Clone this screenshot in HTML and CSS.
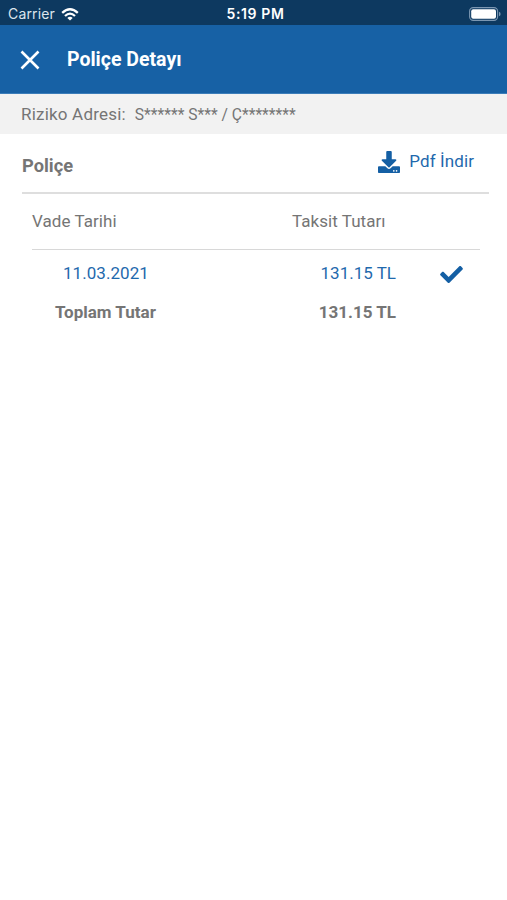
FILE: index.html
```html
<!DOCTYPE html>
<html lang="tr">
<head>
<meta charset="utf-8">
<title>Poliçe Detayı</title>
<link rel="stylesheet" href="styles.css">
</head>
<body>
<div class="status">
  <div class="carrier"><span>Carrier</span>
    <svg class="wifi" viewBox="0 0 18 13" fill="none" stroke="#fff" stroke-width="2.3"><path d="M1.2 4.9Q9-2.3 16.8 4.9M4 8Q9 3.2 14 8"/><path d="M9 12.6L6.3 9.9Q9 7.7 11.7 9.9Z" fill="#fff" stroke="none"/></svg>
  </div>
  <span class="time">5:19 PM</span>
  <svg class="battery" viewBox="0 0 32 14"><rect x=".6" y=".6" width="28" height="12.8" rx="3.6" fill="none" stroke="#7c97b2" stroke-width="1.1"/><rect x="2.2" y="2.3" width="24.8" height="9.4" rx="2" fill="#fff"/><path d="M30 4.8Q31.6 5.3 31.6 7T30 9.2Z" fill="#7c97b2"/></svg>
</div>
<header class="bar">
  <svg class="close" viewBox="0 0 20 20"><path d="M1.500 1.500l17 17M18.500 1.500l-17 17" stroke="#fff" stroke-width="2.6"/></svg>
  <h1>Poliçe Detayı</h1>
</header>
<div class="address"><span class="address-label">Riziko Adresi:</span><span class="masked">S****** S*** / Ç********</span></div>
<main>
  <div class="section-head">
    <h2>Poliçe</h2>
    <a class="pdf"><svg class="download" viewBox="0 0 512 512" fill="#145fa4"><path d="M216 0h80c13.300 0 24 10.700 24 24v168h87.700c17.800 0 26.700 21.500 14.100 34.100L269.700 378.300c-7.500 7.500-19.800 7.500-27.300 0L90.100 226.100c-12.600-12.600-3.700-34.100 14.100-34.100H192V24c0-13.300 10.700-24 24-24zm296 376v112c0 13.300-10.700 24-24 24H24c-13.300 0-24-10.700-24-24V376c0-13.300 10.700-24 24-24h146.700l49 49c20.100 20.100 52.500 20.100 72.600 0l49-49H488c13.300 0 24 10.700 24 24zm-124 88c0-11-9-20-20-20s-20 9-20 20 9 20 20 20 20-9 20-20zm64 0c0-11-9-20-20-20s-20 9-20 20 9 20 20 20 20-9 20-20z"/></svg><span>Pdf İndir</span></a>
  </div>
  <div class="table">
    <div class="row head"><span>Vade Tarihi</span><span class="amount-head">Taksit Tutarı</span></div>
    <div class="row item"><span class="date">11.03.2021</span><span class="amount">131.15 TL</span>
      <svg class="check" viewBox="0 65 512 382" fill="#145fa4"><path d="M173.900 439.400l-166.400-166.400c-10-10-10-26.200 0-36.200l36.200-36.200c10-10 26.200-10 36.200 0L192 312.700 432.100 72.600c10-10 26.200-10 36.200 0l36.200 36.200c10 10 10 26.200 0 36.200l-294.400 294.400c-10 10-26.200 10-36.200 0z"/></svg>
    </div>
    <div class="row total"><span class="label">Toplam Tutar</span><span class="amount">131.15 TL</span></div>
  </div>
</main>
</body>
</html>
```
FILE: styles.css
```css
* { box-sizing: border-box; }
body { margin: 0; background: #fff; color: #757575; font: 17px/24px Roboto, sans-serif; }
svg { display: block; flex: none; }
h1, h2 { margin: 0; }
.status { height: 25px; padding: 1px 6px 0 8px; display: grid; grid-template-columns: 1fr auto 1fr; align-items: center; background: #0d3960; color: #fff; font: 14px/24px Inter, sans-serif; }
.carrier { display: flex; align-items: center; gap: 6px; padding-top: 1px; color: #dce5ed; letter-spacing: .15px; }
.wifi { width: 18px; height: 13px; }
.time { font-weight: 600; letter-spacing: .6px; padding: 1px 0 0 2px; }
.battery { width: 32px; height: 14px; justify-self: end; }
.bar { height: 69px; padding-left: 20px; display: flex; align-items: center; gap: 27px; background: #1761a5; border-bottom: 1px solid #3c7db9; color: #fff; }
.close { width: 20px; height: 20px; margin-top: 1px; }
.bar h1 { font-size: 19.5px; line-height: 26px; font-weight: 700; padding-top: 1px; }
.address { height: 40px; padding-left: 21px; display: flex; align-items: center; gap: 9px; background: #f2f2f2; }
.address-label { letter-spacing: .2px; }
.masked { font-size: 15.600px; padding-top: 1px; }
main { padding: 0 18px 0 22px; }
.section-head { height: 60px; display: flex; justify-content: space-between; border-bottom: 2px solid #dedede; }
.section-head h2 { padding-top: 20px; font-size: 18.300px; font-weight: 700; }
.pdf { display: flex; align-items: flex-start; gap: 9px; padding: 15px 15px 0 0; color: #1f69ad; }
.download { width: 22px; height: 22px; margin-top: 2px; }
.pdf span { letter-spacing: .1px; }
.table { margin: 0 9px 0 10px; }
.row { display: grid; grid-template-columns: 260px 104px 1fr; align-items: center; }
.head { height: 56px; padding-bottom: 2px; border-bottom: 1px solid #d8d8d8; letter-spacing: .05px; }
.item { height: 46px; color: #1f69ad; }
.date { padding-left: 31px; letter-spacing: .05px; }
.amount { text-align: right; }
.check { width: 23px; height: 17px; justify-self: end; margin: 3px 17px 0 0; }
.total { height: 31px; font-weight: 700; }
.label { padding-left: 23px; }
```
